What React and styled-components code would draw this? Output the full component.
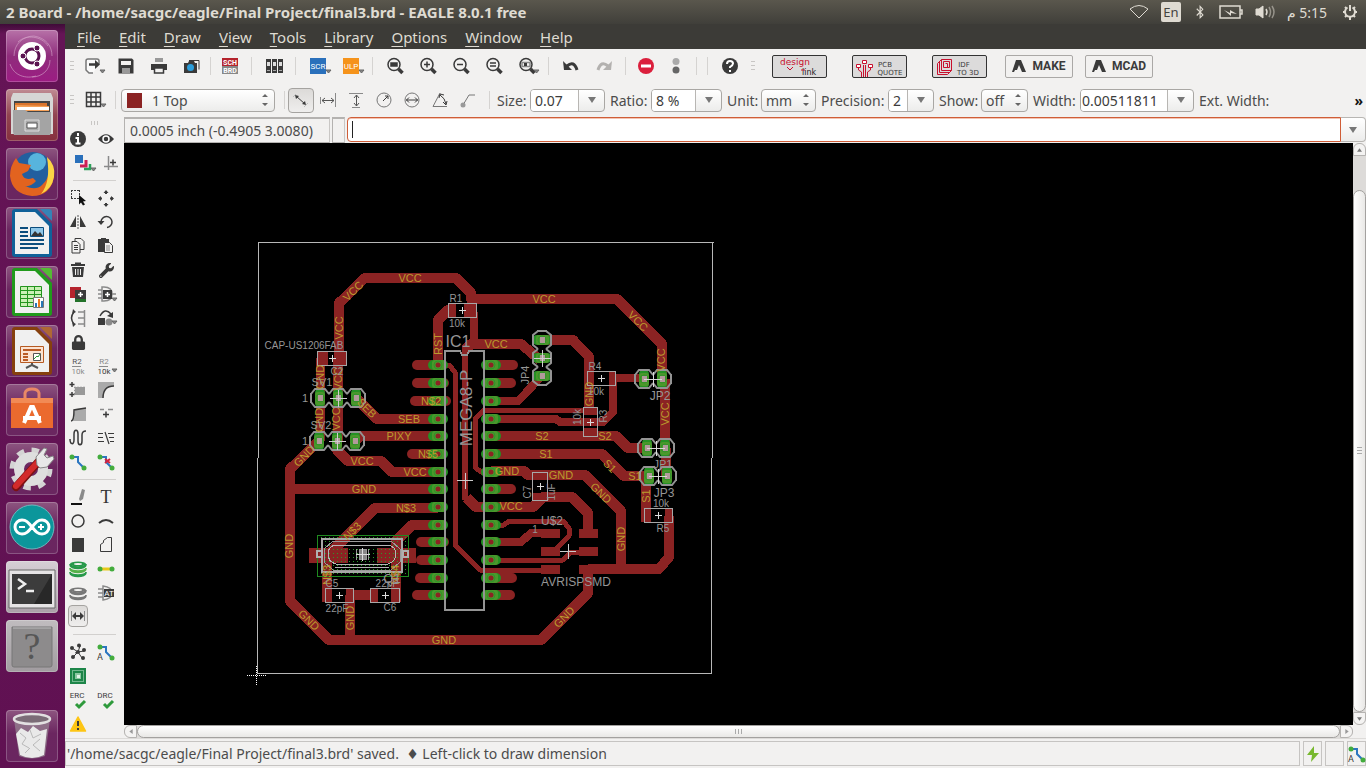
import React from "react";
import styled, { createGlobalStyle, css } from "styled-components";
import { FaWrench, FaLock, FaBluetoothB } from "react-icons/fa";

const GlobalStyle = createGlobalStyle`
  * { box-sizing: border-box; }
  html, body, #root { height: 100%; }
  body {
    margin: 0;
    overflow: hidden;
    background: #f2f1f0;
    color: #4c4c4c;
    font-family: "Noto Sans", "Open Sans", "DejaVu Sans", sans-serif;
    font-size: 14px;
  }
  button, input, select { font: inherit; color: inherit; }
  button { border: 0; padding: 0; background: none; cursor: pointer; }
  svg { display: block; flex: none; overflow: visible; }
`;

/* ---------- Shell ---------- */

const Desktop = styled.div`
  display: flex;
  flex-direction: column;
  height: 100vh;
`;

const TitleBar = styled.header`
  display: flex;
  align-items: center;
  height: 24px;
  flex: none;
  padding: 0 8px 0 6px;
  background: linear-gradient(#5a574d, #403f3a);
  color: #dfdbd2;
`;

const Title = styled.h1`
  flex: 1;
  margin: 0;
  font-size: 15px;
  line-height: 24px;
  font-weight: 700;
  white-space: nowrap;
`;

const Tray = styled.div`
  display: flex;
  align-items: center;
  gap: 12px;
`;

const Lang = styled.span`
  width: 20px;
  border-radius: 2px;
  background: #dfdbd2;
  color: #45443f;
  font-size: 13px;
  line-height: 20px;
  text-align: center;
`;

const Clock = styled.time`
  margin-right: 3px;
  font-size: 14px;
  white-space: nowrap;
`;

const Work = styled.div`
  display: flex;
  flex: 1;
  min-height: 0;
`;

const Launcher = styled.nav`
  display: flex;
  flex-direction: column;
  align-items: center;
  gap: 7px;
  width: 65px;
  flex: none;
  padding: 6px 1px 6px 0;
  background: linear-gradient(#3f0b38, #651456 10px, #601152);
`;

const Tile = styled.button`
  width: 52px;
  height: 52px;
  flex: none;
  border-radius: 4px;
  background: ${(p) => p.$bg || "linear-gradient(#8d5580, #6b2660 45%, #6a2660)"};
  box-shadow: inset 0 0 0 1px rgba(255, 255, 255, 0.22);

  &:last-child {
    margin-top: auto;
  }
`;

const Main = styled.main`
  display: flex;
  flex-direction: column;
  flex: 1;
  min-width: 0;
`;

const MenuBar = styled.nav`
  display: flex;
  align-items: center;
  gap: 18px;
  height: 25px;
  flex: none;
  padding-left: 12px;
  background: #3c3b37;
  color: #dfdbd2;
`;

const MenuItem = styled.button`
  font-size: 15px;
  line-height: 22px;

  u {
    text-underline-offset: 3px;
    text-decoration-skip-ink: none;
  }
`;

/* ---------- Toolbars ---------- */

const Toolbar = styled.div`
  display: flex;
  align-items: center;
  height: 34px;
  flex: none;
  white-space: nowrap;
`;

const Handle = styled.span`
  width: 14px;
  height: 10px;
  flex: none;
  background: repeating-linear-gradient(#c8c6c4 0 1px, transparent 1px 4px) center / 4px 100% no-repeat;
`;

const Separator = styled.span`
  width: ${(p) => p.$w || 11}px;
  height: 18px;
  flex: none;
  background: linear-gradient(#d5d3d1, #d5d3d1) center / 1px 100% no-repeat;
`;

const ToolButton = styled.button`
  display: flex;
  align-items: center;
  justify-content: center;
  width: ${(p) => p.$w || 33}px;
  height: 24px;
  flex: none;

  ${(p) =>
    p.$active &&
    css`
      height: ${p.$size || 25}px;
      border: 1px solid #a5a3a0;
      border-radius: 4px;
      background: linear-gradient(#dcdad8, #efeeed);
    `}
`;

const LinkButton = styled.button`
  display: flex;
  align-items: center;
  width: 55px;
  height: 23px;
  flex: none;
  margin-left: ${(p) => p.$gap || 25}px;
  border: 1px solid #333;
  border-radius: 2px;
  background: #dcdbdb;
`;

const CadButton = styled.button`
  display: flex;
  align-items: center;
  justify-content: center;
  gap: 6px;
  width: 68px;
  height: 23px;
  flex: none;
  margin-left: ${(p) => p.$gap || 12}px;
  border: 1px solid #aaa8a6;
  border-radius: 2px;
  font-family: Roboto, sans-serif;
  font-size: 12px;
  font-weight: 700;
  color: #3b3b3b;
`;

const Field = styled.label`
  display: flex;
  align-items: center;
  flex: none;
  margin-right: 5px;
`;

const FieldName = styled.span`
  width: ${(p) => p.$w}px;
`;

const Box = styled.span`
  display: flex;
  align-items: center;
  width: ${(p) => p.$w}px;
  height: 23px;
  flex: none;
  overflow: hidden;
  border: 1px solid #a9a7a4;
  border-radius: 4px;
  background: linear-gradient(#fff, #ececeb);
`;

const TextInput = styled.input`
  flex: 1;
  min-width: 0;
  height: 100%;
  padding: 0 0 0 ${(p) => p.$pad || 4}px;
  border: 0;
  border-right: 1px solid #b8b6b3;
  background: #fff;
  color: #3c3c3c;
  outline: none;
`;

const Arrow = styled.button`
  display: flex;
  align-items: center;
  justify-content: center;
  width: 25px;
  height: 100%;
  flex: none;
`;

const Select = styled.select`
  flex: 1;
  min-width: 0;
  height: 100%;
  padding: 0 0 0 ${(p) => p.$pad || 4}px;
  border: 0;
  appearance: none;
  background: none;
  outline: none;
`;

const Swatch = styled.span`
  width: 15px;
  height: 15px;
  margin-left: 5px;
  background: #8b2323;
`;

const More = styled.button`
  margin-left: auto;
  margin-right: 3px;
  color: #111;
  font-weight: 700;
`;

/* ---------- Body ---------- */

const Body = styled.div`
  display: flex;
  flex: 1;
  min-height: 0;
`;

const Palette = styled.aside`
  width: 59px;
  flex: none;
`;

const PaletteHandle = styled.div`
  height: 10px;
  background: repeating-linear-gradient(90deg, #c8c6c4 0 1px, transparent 1px 3px) 26px 4px / 7px 4px no-repeat;
`;

const PaletteGrid = styled.div`
  display: grid;
  grid-template-columns: 26px 30px;
  grid-auto-rows: 24px;
  justify-items: center;
`;

const PaletteRule = styled.hr`
  height: 1px;
  margin: 5px 8px;
  border: 0;
  background: #d2d0ce;
`;

const Editor = styled.section`
  display: flex;
  flex-direction: column;
  flex: 1;
  min-width: 0;
`;

const CommandRow = styled.div`
  display: flex;
  gap: 2px;
  height: 26px;
  flex: none;
`;

const Sunken = styled.output`
  display: flex;
  align-items: center;
  width: ${(p) => p.$w}px;
  flex: none;
  padding-left: 5px;
  border: 1px solid #b4b2b0;
  border-top: 2px solid #b4b2b0;
  border-right-color: #c9c7c5;
  line-height: 20px;
  white-space: nowrap;
`;

const CommandBox = styled.div`
  display: flex;
  flex: 1;
  min-width: 0;
  height: 25px;
`;

const CommandInput = styled.input`
  flex: 1;
  min-width: 0;
  padding: 0 4px;
  border: 1px solid #cf5d37;
  border-radius: 4px 0 0 4px;
  background: linear-gradient(#222, #222) 4px center / 1px 17px no-repeat #fff;
  box-shadow: inset 0 1px 0 #f3c3b2;
  caret-color: transparent;
  outline: none;
`;

const CommandArrow = styled(Arrow)`
  border: 1px solid #b8b6b3;
  border-left: 0;
  border-radius: 0 4px 4px 0;
  background: linear-gradient(#fff, #ececeb);
`;

const CanvasGrid = styled.div`
  display: grid;
  grid-template-columns: 1fr 13px;
  grid-template-rows: 1fr 13px;
  flex: 1;
  min-height: 0;
`;

const Canvas = styled.div`
  min-width: 0;
  min-height: 0;
  overflow: hidden;
  background: #000;

  svg {
    width: 100%;
    height: 100%;
  }
`;

const ScrollBar = styled.div`
  display: flex;
  flex-direction: ${(p) => (p.$vertical ? "column" : "row")};
  background: #dddbd9;
  border-radius: 7px;
`;

const ScrollArrow = styled.button`
  display: flex;
  align-items: center;
  justify-content: center;
  width: 13px;
  height: 13px;
  flex: none;
  border: 1px solid #b5b3b1;
  border-radius: ${(p) => p.$r};
  background: #f4f3f2;
`;

const Thumb = styled.div`
  display: flex;
  align-items: center;
  justify-content: center;
  flex: 1;
  margin: ${(p) => (p.$vertical ? "34px 0 0" : "0")};
  border: 1px solid #a3a19f;
  border-radius: 7px;
  background: linear-gradient(${(p) => (p.$vertical ? "90deg" : "180deg")}, #fff, #e9e8e6);
`;

const StatusBar = styled.footer`
  display: flex;
  gap: 3px;
  height: 30px;
  flex: none;
  padding: 2px 0 2px;
  border-top: 1px solid #dddbd9;
`;

const StatusCell = styled.div`
  display: flex;
  align-items: center;
  width: ${(p) => p.$w || 19}px;
  flex: ${(p) => (p.$grow ? 1 : "none")};
  justify-content: ${(p) => (p.$grow ? "flex-start" : "center")};
  padding-left: ${(p) => (p.$grow ? 1 : 0)}px;
  border: 1px solid #c6c4c2;
  white-space: pre;
`;

/* ---------- Icons ---------- */

const DARK = "#3a3a3a";
const MID = "#8a8a8a";

const Icon = ({ children, w = 24, ...rest }) => (
  <svg width={w} height={24} viewBox={`0 0 ${w} 24`} fill="none" stroke={DARK} strokeWidth="1.5" {...rest}>
    {children}
  </svg>
);

const Tri = ({ x, y = 16 }) => <path d={`M${x} ${y}h5l-2.500 3z`} fill="#888" stroke="#666" strokeWidth="1" />;

const Down = () => (
  <svg width="8" height="6" viewBox="0 0 8 6">
    <path d="M0 0h8L4 6z" fill="#777" />
  </svg>
);

const UpDown = () => (
  <svg width="14" height="14" viewBox="0 0 14 14" fill="#666">
    <path d="M2 4h6L5 1zM2 10h6l-3 3z" />
  </svg>
);

const Mag = ({ children }) => (
  <>
    <circle cx="11" cy="10.500" r="6" strokeWidth="1.500" />
    <path d="M15.500 15l4 4" strokeWidth="3.500" />
    {children}
  </>
);

const Small = ({ children, ...rest }) => (
  <text stroke="none" fill={DARK} fontSize="8" fontFamily="Roboto, sans-serif" textAnchor="middle" {...rest}>
    {children}
  </text>
);

const RouteIcon = ({ children }) => (
  <Icon>
    <path d="M6 7h6v5l6 6" stroke="#2b76c0" strokeWidth="2" />
    <circle cx="6" cy="7" r="2.500" fill="#43ac3d" stroke="none" />
    <circle cx="18" cy="18" r="2.500" fill="#43ac3d" stroke="none" />
    {children}
  </Icon>
);

const Disc = ({ y, color, top }) => (
  <g stroke="none">
    <path d={`M4 ${y}a8 3 0 0 0 16 0v1a8 3.500 0 0 1-16 0z`} fill={color} stroke={color} />
    {top && <ellipse cx="12" cy={y} rx="8" ry="2.500" fill={color} />}
    {top && <ellipse cx="12" cy={y} rx="4" ry="1" fill="#f2f1f0" />}
  </g>
);

const paletteTop = [
  ["Info", <Icon><circle cx="12" cy="12" r="8" fill={DARK} stroke="none" /><path d="M12 6v3M9.500 11h2.500v5M9.500 16.500h5" stroke="#fff" strokeWidth="2" /></Icon>],
  ["Show", <Icon><path d="M4 12Q12 2.500 20 12Q12 21.500 4 12z" fill={DARK} stroke="none" /><circle cx="12" cy="12" r="3" stroke="#fff" /></Icon>],
  ["Display", <Icon><path d="M9 4h8v8H9z" fill="#2a70bb" stroke="none" /><path d="M20 9v6h-6" stroke="#cf1f56" strokeWidth="3" /><path d="M24 13v5h-6" stroke="#2ca05a" strokeWidth="2.500" /><Tri x={25} y={17} /></Icon>],
  ["Mark", <Icon stroke={MID}><path d="M14.500 5v14M10 15.500h14" /><path d="M19 8.500v6M16 11.500h6" stroke={DARK} /></Icon>],
];

const paletteEdit = [
  ["Group", <Icon><path d="M5 4.500h9M5 12.500h9M5.500 4v9M13.500 4v9" strokeDasharray="2 1" strokeWidth="1" /><path d="M13 9l7 6-3 .5 2 3-2 1-2-3-2 2z" fill="#111" stroke="none" /></Icon>],
  ["Move", <Icon fill={DARK}><path d="M12 5v3M12 17v3M5 12.500h3M16 12.500h3" strokeWidth="2" /><path d="M9.500 7l2.500-3 2.500 3zM9.500 18l2.500 3 2.500-3zM7 10l-3 2.500L7 15zM17 10l3 2.500-3 2.500z" stroke="none" /></Icon>],
  ["Mirror", <Icon><path d="M4 17h6V6zM20 17h-6V6z" fill={DARK} stroke="none" /><path d="M12 5v14" stroke={MID} strokeDasharray="2 1" /></Icon>],
  ["Rotate", <Icon><path d="M7 12a5.500 5.500 0 1 1 6 5.500" /><path d="M3.500 11h7L7 15z" fill={DARK} stroke="none" /></Icon>],
  ["Copy", <Icon strokeWidth="1"><path d="M9 4.500h6l3 3v8H9z" fill="#f2f1f0" /><path d="M6 7.500h5l3 3v8.500H6z" fill="#f2f1f0" /><path d="M8 11.500h4M8 13.500h4M8 15.500h4" /></Icon>],
  ["Paste", <Icon strokeWidth="1"><path d="M4 5h3V4h5v1h3v13H4z" fill={DARK} stroke="none" /><path d="M10.500 8.500h5l3 3v7h-8z" fill="#f2f1f0" /><path d="M12 12h4M12 14h4M12 16h4" stroke={MID} /></Icon>],
  ["Delete", <Icon><path d="M5 7h14M9 5.500h6" strokeWidth="2" /><path d="M6 9h12l-1 10H7z" fill={DARK} stroke="none" /><path d="M9.500 11v6M12 11v6M14.500 11v6" stroke="#f2f1f0" strokeWidth="1" /></Icon>],
  ["Change", <FaWrench size={15} color={DARK} />],
  ["Add", <Icon stroke="none"><path d="M4 5h11v11H4z" fill="#b5232d" /><path d="M9 14h11v6H9z" fill="#23722a" /><path d="M9 8h11v9H9z" fill={DARK} /><path d="M14.500 10v5M12 12.500h5" stroke="#fff" strokeWidth="1.500" /></Icon>],
  ["Invoke", <Icon stroke={MID}><path d="M4 8h4M4 12h4M4 16h4M8 5h2q8 0 8 7t-8 7H8z" /><path d="M9 8h9v9H9z" fill={DARK} stroke="none" /><path d="M13.500 10v5M11 12.500h5" stroke="#fff" /><path d="M18 12h4" /><Tri x={18} y={16} /></Icon>],
  ["Pinswap", <Icon><path d="M8 6q-5 6 0 12" /><path d="M7 3l3 3-4 2zM6 16l4 2-3 3z" fill={DARK} stroke="none" /><path d="M18.500 4v17M12 6h6M12 12h6M12 18h6" stroke={MID} /></Icon>],
  ["Replace", <Icon><path d="M6 10q5-9 11-2" /><path d="M19 6v6l-6-2z" fill={DARK} stroke="none" /><path d="M4 12h7v7H4z" fill={DARK} stroke="none" /><circle cx="15" cy="16" r="3.500" fill={MID} stroke="none" /><Tri x={18} y={15} /></Icon>],
  ["Lock", <FaLock size={15} color={DARK} />],
  null,
  ["Name", <Icon><Small x="11" y="10" fill="#555">R2</Small><path d="M6 12.500h9" stroke={MID} strokeWidth="1" /><Small x="12" y="20" fill={MID}>10k</Small></Icon>],
  ["Value", <Icon><Small x="10" y="10" fill={MID}>R2</Small><path d="M5 12.500h9" stroke={MID} strokeWidth="1" /><Small x="10" y="20">10k</Small><Tri x={18} y={15} /></Icon>],
  ["Smash", <Icon><path d="M9 9h10v8H9z" fill="#999" stroke="none" /><path d="M8 9.500h12M8 12.500h12M8 15.500h12" stroke="#999" strokeDasharray="2 1" /><path d="M6 4v5M3.500 6.500h5M6 14v5M3.500 16.500h5" /></Icon>],
  ["Miter", <Icon><path d="M4 20V4h16v4q-11 0-11 12z" fill="#aaa" stroke="none" /><path d="M20 8Q9 8 9 20" /></Icon>],
  ["Split", <Icon><path d="M9 7l11-1v13H6z" fill="#aaa" stroke="none" /><path d="M5 19q3 0 3-11l12-2" /></Icon>],
  ["Optimize", <Icon><path d="M6 7.500h4M14 7.500h5" stroke={MID} /><path d="M9 12.500h6M12 9.500v6" /></Icon>],
  ["Meander", <Icon><path d="M4 13c0 6 4 6 4 1V8c0-5 4-5 4 0v7c0 5 4 5 4 0V9c0-3 1-4 4-4" /></Icon>],
  ["Ripup pairs", <Icon strokeWidth="1.200"><path d="M4 7.500h5M4 11.500h5M4 15.500h6M11 6l4 12M14 7.500h6M15 11.500h5M16 15.500h4" /></Icon>],
  ["Route", <RouteIcon />],
  ["Ripup", <RouteIcon><path d="M11 9l5 4M16 9l-5 4" stroke="#d4213d" strokeWidth="2" /></RouteIcon>],
];

const paletteDraw = [
  ["Line", <Icon><path d="M5 19h11" stroke="#111" strokeWidth="2" /><path d="M16 4l3 1-2 9-3 2-1-2z" fill={MID} stroke="none" /></Icon>],
  ["Text", <Icon><text x="12" y="18" stroke="none" fill="#333" fontSize="18" fontFamily="Liberation Serif, serif" textAnchor="middle">T</text></Icon>],
  ["Circle", <Icon><circle cx="12" cy="12" r="6" strokeWidth="1.500" /></Icon>],
  ["Arc", <Icon><path d="M5 14q7-6 14 0" strokeWidth="2" /></Icon>],
  ["Rect", <Icon><path d="M6 5h12v14H6z" fill={DARK} stroke="none" /></Icon>],
  ["Polygon", <Icon strokeWidth="1"><path d="M17.500 4.500v14h-11v-7l3-2v-2l4-3z" /></Icon>],
  ["Via", <Icon><Disc y={15} color="#27994a" /><Disc y={11} color="#55b14a" /><Disc y={7} color="#27994a" top /></Icon>],
  ["Signal", <Icon><path d="M7 12h10" stroke="#e9c91a" strokeWidth="3" /><g fill="#43ac3d" stroke="none"><circle cx="6" cy="12" r="2.500" /><circle cx="18" cy="12" r="2.500" /></g></Icon>],
  ["Hole", <Icon><Disc y={14} color="#777" /><Disc y={9} color="#777" top /></Icon>],
  ["Attribute", <Icon stroke={MID}><path d="M4 8h5M4 12h5M4 16h5M9 5q9 1 9 7t-9 7z" /><path d="M10 8h10v8H10z" fill={DARK} stroke="none" /><Small x="15" y="15" fill="#fff">AT</Small></Icon>],
  ["Dimension", <Icon><path d="M5.500 7v10M18.500 7v10" stroke={MID} strokeWidth="1" /><path d="M7 12h10" strokeWidth="2" /><path d="M6 12l4-4v8zM18 12l-4-4v8z" fill={DARK} stroke="none" /></Icon>, true],
  null,
];

const paletteCheck = [
  ["Ratsnest", <Icon strokeWidth="1" fill={DARK}><path d="M12 12L6 8M12 12l2-6M12 12l6-1M12 12l4 6M12 12l-5 5M12 12l-3 1" /><g stroke="none"><circle cx="6" cy="8" r="2" /><circle cx="13" cy="5.500" r="2" /><circle cx="18" cy="10" r="2" /><circle cx="17" cy="18" r="2" /><circle cx="7" cy="17" r="2" /><circle cx="12" cy="12" r="2" /></g></Icon>],
  ["Autorouter", <RouteIcon><Small x="6" y="20" fontSize="9">A</Small></RouteIcon>],
  ["Drill aid", <Icon><path d="M4 4h16v16H4z" fill="#1d8548" stroke="none" /><path d="M6.500 6.500h11v11h-11z" stroke="#c9e8d3" strokeWidth="1" strokeDasharray="1 1" /><path d="M9 9h6v6H9z" fill="#8cc7a1" stroke="none" /><path d="M11 11h3v3h-3z" fill="#e3f3e8" stroke="none" /></Icon>],
  null,
  ["ERC", <Icon><Small x="11" y="10">ERC</Small><path d="M10 16l3 3 6-6" stroke="#2f9a3c" strokeWidth="3" /></Icon>],
  ["DRC", <Icon><Small x="11" y="10">DRC</Small><path d="M10 16l3 3 6-6" stroke="#2f9a3c" strokeWidth="3" /></Icon>],
  ["Errors", <Icon><path d="M12 5l7.500 14h-15z" fill="#fdc515" stroke="#fdc515" strokeLinejoin="round" /><path d="M12 9v5M12 16v2" strokeWidth="2" /></Icon>],
];

/* ---------- Launcher art ---------- */

const Art = ({ children }) => (
  <svg width="52" height="52" viewBox="0 0 52 52" fill="none">
    {children}
  </svg>
);

const OfficeDoc = ({ color, light, children }) => (
  <Art>
    <path d="M9 2h22l15 15v30q0 3-3 3H9q-3 0-3-3V5q0-3 3-3z" fill={color} />
    <path d="M34 2h9q3 0 3 3v9z" fill={light} />
    <path d="M9 5h20l14 14v28H9z" fill="#f0f0f0" />
    {children}
  </Art>
);

const apps = [
  {
    name: "Dash",
    bg: "linear-gradient(#b772a8, #8f2d7c 50%, #9c1c83)",
    art: (
      <Art>
        <path d="M8 26c0-12 9-20 20-20 12 2 18 10 18 20M4 34C8 46 20 49 30 46M44 30c0 10-8 17-18 17M12 12C20 4 36 6 42 16" stroke="#d7a6cc" opacity=".6" />
        <circle cx="26" cy="26" r="14" fill="#fff" />
        <circle cx="26" cy="26" r="7" stroke="#5b1250" strokeWidth="3" />
        <g fill="#5b1250" stroke="#fff"><circle cx="17" cy="26" r="3" /><circle cx="31" cy="18" r="3" /><circle cx="31" cy="34" r="3" /></g>
      </Art>
    ),
  },
  {
    name: "Files",
    bg: "linear-gradient(#c08c94, #924451 50%, #85303e)",
    art: (
      <Art>
        <path d="M7 4h38l2 5v36H5V9z" fill="#d6d6d5" />
        <path d="M8 12h36v12H8z" fill="#454545" />
        <path d="M9 14h32v4H9z" fill="#d9742d" /><path d="M9 16l34 1v5H9z" fill="#f4a058" /><path d="M11 18h32v3H11z" fill="#fff" />
        <path d="M7 21h12l3 2h23v20l-1 3H8l-1-3z" fill="#a4a4a4" />
        <path d="M19 31h14v11H19z" fill="#aaa" stroke="#ddd" /><path d="M21 34h10v5H21z" fill="#fff" stroke="#555" />
      </Art>
    ),
  },
  {
    name: "Firefox",
    art: (
      <Art>
        <circle cx="27" cy="24" r="20" fill="#225f9f" /><circle cx="31" cy="14" r="9" fill="#57b4dd" />
        <path d="M41 10q8 8 7 18-3 20-22 20Q6 46 4 28q0-10 6-18l3 5 12 2-3 6-6 3q2 7 11 4l3 3q-5 6-11 5 11 5 17-1Q47 27 41 10z" fill="#e2631f" />
        <path d="M41 9q9 8 7 20-2 12-13 17 10-12 6-37z" fill="#fbd546" />
      </Art>
    ),
  },
  {
    name: "Writer",
    art: (
      <OfficeDoc color="#106199" light="#3583b6">
        <path d="M14 21h8M14 25h8M14 29h8M14 33h24M14 37h24M14 41h18" stroke="#0b4d7d" strokeWidth="2" />
        <path d="M24.500 20.500h13v9h-13z" fill="#8fc7e8" stroke="#0b4d7d" /><path d="M25 29l4-5 3 3 2-2 3 4z" fill="#333" />
      </OfficeDoc>
    ),
  },
  {
    name: "Calc",
    art: (
      <OfficeDoc color="#219a1c" light="#54bb34">
        <path d="M14.500 20.500h21v20h-21zM14 24.500h21M14 28.500h21M14 32.500h21M14 36.500h21M21.500 20v20M28.500 20v20" fill="#caf0b5" stroke="#23951e" />
        <path d="M27.500 31.500h10v10h-10z" fill="#fff" stroke="#777" /><path d="M29 37h2v4h-2z" fill="#2878b8" /><path d="M32 33h2v8h-2z" fill="#ef7b20" /><path d="M35 35h2v6h-2z" fill="#2878b8" />
      </OfficeDoc>
    ),
  },
  {
    name: "Impress",
    art: (
      <OfficeDoc color="#86400e" light="#af6834">
        <path d="M14.500 21.500h23v16h-23z" fill="#fce3d2" stroke="#b65a22" />
        <path d="M17 25h18M17 29h5M17 32h5M17 35h5" stroke="#bb5c25" strokeWidth="2" />
        <path d="M27.500 28.500h7v7h-7z" fill="#fff" stroke="#555" /><path d="M28 34l3-3 1 1 2-3" stroke="#2d9a3a" /><path d="M26 38v2l-6 3M26 40l6 3" stroke="#555" strokeWidth="2" />
      </OfficeDoc>
    ),
  },
  {
    name: "Software",
    art: (
      <Art>
        <path d="M19 15V9q1-4 7-4t7 4v6" stroke="#e98866" strokeWidth="3" />
        <path d="M5 14h42v30H5z" fill="#eb6a2e" /><path d="M5 14h42v5H5z" fill="#f18a55" />
        <path d="M18 39l7-16h2l7 16M17 34h18" stroke="#fff" strokeWidth="4" />
      </Art>
    ),
  },
  {
    name: "Settings",
    art: (
      <Art>
        <circle cx="25" cy="26" r="18" stroke="#d4d4d4" strokeWidth="7" strokeDasharray="7 7.137" />
        <circle cx="25" cy="26" r="12" stroke="#dedede" strokeWidth="10" />
        <path d="M10 44L34 17" stroke="#7c1212" strokeWidth="8" strokeLinecap="round" /><path d="M10 43L31 20" stroke="#d22b2b" strokeWidth="6" strokeLinecap="round" />
        <path d="M31 22l-1-8 8-9 3 1-3 6 3 3 6-2 1 3-7 8-7 1z" fill="#e8e8e8" stroke="#888" />
      </Art>
    ),
  },
  {
    name: "Arduino",
    art: (
      <Art>
        <circle cx="26" cy="25" r="22" fill="#0b969b" stroke="#6bb8bd" />
        <path d="M26 25c-4-5-6-7-10-7a7 7 0 0 0 0 14c4 0 6-2 10-7s6-7 10-7a7 7 0 0 1 0 14c-4 0-6-2-10-7z" stroke="#fff" strokeWidth="3" />
        <path d="M13 25h6M32 25h6M35 22v6" stroke="#fff" strokeWidth="2" />
      </Art>
    ),
  },
  {
    name: "Terminal",
    bg: "linear-gradient(#d6cfd5, #aaa0a8)",
    art: (
      <Art>
        <path d="M3 9h46v38H3z" fill="#e6e4e5" stroke="#666" /><path d="M6 13h40v30H6z" fill="#282828" /><path d="M6 13h40L28 43H6z" fill="#3c3c3c" />
        <path d="M12 18l7 5-7 5M20 30h8" stroke="#eee" strokeWidth="2.500" />
      </Art>
    ),
  },
  {
    name: "Unknown",
    bg: "linear-gradient(#c0bcbf, #a19ca0)",
    art: (
      <Art>
        <path d="M6 7h40v38q0 2-2 2H8q-2 0-2-2z" fill="#8d8b8c" stroke="#777" /><path d="M7 8h38" stroke="#bbb" />
        <text x="26" y="39" textAnchor="middle" fontSize="38" fontFamily="Liberation Serif, serif" fill="#565656">?</text>
      </Art>
    ),
  },
  {
    name: "Trash",
    art: (
      <Art>
        <path d="M8 9h36l-5 37q-13 5-26 0z" fill="#9b8f98" opacity=".65" />
        <path d="M10 24l5-6 7 4 5-6 7 5 7-2-3 26q-12 6-24 0z" fill="#e9e9e9" />
        <path d="M14 23l6 5-4 6 7 4M24 20l3 8 8-4M34 29l-7 6 7 6M19 43l5-5" stroke="#b9b9b9" />
        <ellipse cx="26" cy="9" rx="18" ry="5" fill="#7b6c77" stroke="#e2e0e1" strokeWidth="2.500" />
      </Art>
    ),
  },
];

/* ---------- Board ---------- */

const COPPER = "#8b2323";
const pinY = [365, 383, 401, 419, 436, 454, 472, 489, 507, 525, 542, 560, 578, 595];

// [width, path]
const traces = [
  [10, "M339 358V303L365 278H456L471 293V299H617L662 344V379"],
  [10, "M665 379V448M666 448V476"],
  [8, "M474 312V344"],
  [10, "M465 350L471 344H521L540 360"],
  [6, "M465 346V500"],
  [10, "M467 498L476 507H491"],
  [10, "M452 310H448L438 320V365"],
  [5, "M438 365H449L455 372V545L480 570H550"],
  [5, "M590 410H484L475 419V467L481 472H491"],
  [10, "M438 419H377L357 399"],
  [10, "M438 436H360L355 441"],
  [10, "M337 441V450L348 461H381L392 472H438"],
  [10, "M438 489H290"],
  [10, "M319 441L290 469V601L329 640H541L588 593V569"],
  [10, "M588 569H659L669 557V516"],
  [10, "M491 471H524L528 475H585L621 511V573"],
  [10, "M491 507H533L543 497H572L588 513V533"],
  [9, "M320 358V441"],
  [10, "M338 358V441"],
  [10, "M438 508H375L330 553"],
  [10, "M438 525H412L396 541V602"],
  [10, "M327 555V602"],
  [10, "M350 595H375M350 595V640"],
  [10, "M542 340H573L589 357V410"],
  [8, "M613 379V412L603 422H560L556 419H491"],
  [8, "M613 378H644"],
  [8, "M491 401H518L542 376"],
  [10, "M491 436H616L628 448H648"],
  [10, "M491 454H602L624 476H649"],
  [10, "M646 476V522"],
  [5, "M491 525H504L509 521H563L569 528V536L556 549"],
  [8, "M491 542H521L531 533H545"],
  [5, "M491 560H563L571 552H580"],
];

const stubs = [
  [0, 417, 438], [1, 417, 444], [2, 415, 446], [5, 412, 438], [10, 421, 444], [11, 421, 438], [12, 420, 438], [13, 417, 438],
  [0, 491, 513], [1, 491, 511], [7, 491, 511], [12, 491, 512], [13, 491, 510],
];

// [x, y, w, h]
const smdPads = [
  [448, 303, 8, 15], [464, 303, 13, 15], [317, 351, 11, 15], [334, 351, 13, 15],
  [325, 588, 7, 15], [346, 588, 8, 15], [370, 588, 8, 15], [391, 588, 9, 15],
  [309, 548, 39, 15], [377, 548, 39, 15],
  [587, 371, 7, 15], [609, 371, 7, 15], [583, 407, 15, 8], [583, 428, 15, 9],
  [532, 472, 16, 8], [532, 493, 16, 8], [644, 508, 7, 15], [665, 508, 8, 15],
  [541, 529, 19, 9], [541, 547, 19, 9], [541, 565, 19, 9], [579, 529, 19, 9], [579, 547, 19, 9], [579, 565, 19, 9],
];

const bodies = [
  [448, 303, 28, 14], [317, 351, 29, 14], [325, 588, 28, 14], [370, 588, 29, 14],
  [587, 371, 28, 14], [583, 407, 14, 29], [532, 472, 15, 28], [644, 508, 28, 14],
];

// x, y is the first pin, the others follow every 18 units
const headers = [
  { x: 320, y: 398, pins: 3 },
  { x: 319, y: 441, pins: 3 },
  { x: 542, y: 340, pins: 3, vertical: true },
  { x: 644, y: 379, pins: 2 },
  { x: 647, y: 448, pins: 2 },
  { x: 649, y: 476, pins: 2 },
];

// [text, x, y, angle, size]
const netLabels = [
  ["VCC", 410, 278], ["VCC", 353, 291, -45], ["VCC", 339, 328, -90], ["VCC", 338, 379, -90],
  ["RST", 438, 344, -90], ["GND", 320, 377, -90], ["SEB", 367, 408, 45], ["SEB", 409, 419],
  ["PIXY", 399, 436], ["N$2", 431, 401], ["N$5", 428, 454], ["GND", 304, 456, -45],
  ["GND", 319, 420, -90], ["VCC", 336, 419, -90], ["VCC", 362, 461], ["VCC", 415, 472],
  ["GND", 364, 489], ["N$3", 406, 508], ["N$3", 352, 531, -45], ["GND", 289, 546, -90],
  ["GND", 309, 620, 45], ["GND", 350, 618, -90], ["GND", 444, 640], ["GND", 564, 617, -45],
  ["N$3", 327, 575, -90], ["N$4", 395, 575, -90], ["VCC", 544, 299], ["VCC", 638, 321, 45],
  ["VCC", 496, 344], ["VCC", 661, 360, -90], ["VCC", 665, 414, -90], ["GND", 589, 394, -90],
  ["S2", 542, 436], ["S2", 605, 436], ["S1", 546, 454], ["S1", 610, 466, 45], ["S1", 635, 476],
  ["S1", 646, 496, -90], ["GND", 507, 471], ["GND", 561, 475], ["VCC", 511, 506],
  ["GND", 601, 493, 45], ["GND", 621, 539, -90],
];

const partLabels = [
  ["R1", 456, 298, 0, 10], ["10k", 457, 323, 0, 10], ["IC1", 458, 341, 0, 16], ["CAP-US1206FAB", 304, 345, 0, 10],
  ["C2", 337, 371, 0, 10], ["SV1", 322, 382, 0, 11], ["1", 305, 398, 0, 11], ["SV2", 321, 425, 0, 11], ["1", 305, 441, 0, 11],
  ["MEGA8-P", 466, 408, -90, 17], ["C5", 332, 583, 0, 10], ["22pF", 337, 608, 0, 10], ["22pF", 387, 583, 0, 10],
  ["C6", 390, 607, 0, 10], ["Q1", 392, 578, 0, 13], ["JP4", 525, 375, -90, 11], ["R4", 595, 366, 0, 10], ["10k", 596, 391, 0, 10],
  ["10k", 577, 417, -90, 10], ["R3", 603, 416, -90, 10], ["JP2", 660, 396, 0, 12], ["JP1", 663, 464, 0, 11],
  ["JP3", 664, 493, 0, 12], ["10k", 661, 503, 0, 10], ["R5", 663, 528, 0, 10], ["C7", 527, 492, -90, 10],
  ["1uF", 551, 492, -90, 10], ["U$2", 552, 521, 0, 12], ["1", 535, 529, 0, 10], ["AVRISPSMD", 576, 582, 0, 12],
];

const Legend = ({ items, fill }) => (
  <g fill={fill} fontFamily="Liberation Sans, Arial, sans-serif" textAnchor="middle">
    {items.map(([text, x, y, angle = 0, size = 11], i) => (
      <text key={i} fontSize={size} transform={`translate(${x} ${y}) rotate(${angle})`} y={Math.round(size * 0.36)}>
        {text}
      </text>
    ))}
  </g>
);

const Pin = ({ x, y, upright }) => (
  <g transform={`translate(${x} ${y}) rotate(${upright ? 90 : 0})`} shapeRendering="auto">
    <rect x="-10" y="-5" width="20" height="10" rx="5" fill="#249124" />
    <rect x="-6" y="-5" width="13" height="10" rx="3" fill="#4c972c" />
    <circle r="4" stroke="#2f942b" />
  </g>
);

// one outline for the whole row, waisted between the pins
const headerOutline = (pins) => {
  const end = pins * 18 - 9;
  let d = "";
  for (let i = 0; i < pins; i++) {
    const c = i * 18;
    d += `M${c - 9}-4L${c - 5}-9H${c + 5}L${c + 9}-4M${c - 9} 4L${c - 5} 9H${c + 5}L${c + 9} 4`;
  }
  return `${d}M-9-5V5M${end}-5V5`;
};

const Header = ({ x, y, pins, vertical }) => {
  const spots = Array.from({ length: pins }, (_, i) => (vertical ? [x, y + i * 18] : [x + i * 18, y]));
  return (
    <g>
      {spots.map(([px, py]) => (
        <Pin key={`${px}-${py}`} x={px} y={py} upright={!vertical} />
      ))}
      <path
        transform={`translate(${x} ${y}) rotate(${vertical ? 90 : 0})`}
        d={headerOutline(pins)}
        stroke="#949494"
        strokeWidth="2"
        shapeRendering="auto"
      />
      {spots.map(([px, py]) => (
        <path key={`${px}-${py}`} d={`M${px - 2} ${py - 3}h5v6h-5z`} fill="#b39a9a" />
      ))}
      {pins === 3 ? (
        <path d={`M${spots[1][0] - 8} ${spots[1][1] + 0.5}h17M${spots[1][0] + 0.5} ${spots[1][1] - 8}v17`} stroke="#cfcfcf" />
      ) : (
        <path d={`M${x} ${y + 0.5}h18M${x + 9.5} ${y - 7}v15`} stroke="#d8d8d8" />
      )}
    </g>
  );
};

const Board = () => (
  <svg viewBox="124 143 1229 582" preserveAspectRatio="xMinYMin meet" fill="none" role="img" aria-label="Board layout">
    <defs>
      <pattern id="keepout" width="4" height="4" patternUnits="userSpaceOnUse">
        <path d="M1 1h1v1h-1z" fill="#2a9a2a" />
      </pattern>
    </defs>

    <g shapeRendering="crispEdges">
      <g stroke={COPPER}>
        {traces.map(([width, d], i) => (
          <path key={i} d={d} strokeWidth={width} strokeLinejoin="round" />
        ))}
        {stubs.map(([pin, from, to], i) => (
          <path key={i} d={`M${from} ${pinY[pin]}H${to}`} strokeWidth="10" strokeLinecap="round" shapeRendering="auto" />
        ))}
      </g>
      <g fill={COPPER}>
        {smdPads.map(([x, y, w, h], i) => (
          <rect key={i} x={x} y={y} width={w} height={h} />
        ))}
      </g>

      {pinY.map((y) => (
        <React.Fragment key={y}>
          <Pin x={438} y={y} />
          <Pin x={491} y={y} />
          <circle cx="438" cy={y} r="2.500" fill={COPPER} shapeRendering="auto" />
          <circle cx="491" cy={y} r="2.500" fill={COPPER} shapeRendering="auto" />
        </React.Fragment>
      ))}

      {headers.map((header, i) => (
        <Header key={i} {...header} />
      ))}

      {/* crystal */}
      <path d="M317 535h91v41h-91z" fill="url(#keepout)" stroke="#1f8a1f" />
      <path d="M322 539h80v33h-80z" stroke="#a8a8a8" strokeWidth="2" />
      <path d="M333 541h58l9 8v13l-9 8h-58l-9-8v-13z" stroke="#9a9a9a" />
      <path d="M336 545h52q8 2 8 9t-8 10h-52q-8-2-8-10t8-9zM335 567h54" stroke="#b5b5b5" />
      <path d="M317 551h5v6h-5zM403 551h5v6h-5z" stroke="#b0b0b0" strokeWidth="2" />
      <path d="M356.500 549v11M368.500 549v11M359 549h7v10h-7z" fill="#888" stroke="#999" />
      <path d="M356 554.500h14M362.500 548v13" stroke="#ddd" />

      {bodies.map(([x, y, w, h], i) => {
        const cx = x + Math.round(w / 2);
        const cy = y + Math.round(h / 2);
        return (
          <g key={i}>
            <rect x={x + 0.5} y={y + 0.5} width={w} height={h} stroke="#a8a8a8" />
            <path d={`M${cx - 3} ${cy + 0.5}h7M${cx + 0.5} ${cy - 3}v7`} stroke="#ddd" />
          </g>
        );
      })}

      {/* chip */}
      <path d="M460 351H445V610H484V351H469L467 355H462z" stroke="#949494" strokeWidth="2" />
      <path d="M457 480.500h16M465.500 473v16M560 551.500h16M568.500 544v15" stroke="#ccc" />

      {/* board edge */}
      <path d="M258.500 458V242.500H714M712.500 242V458M711.500 458V673.500H257.500V458" stroke="#b8b8b8" />
      <path d="M247 675.500h19M256.500 666v19" stroke="#fff" strokeDasharray="1 1" />
    </g>

    <Legend items={netLabels} fill="#bb9b2d" />
    <Legend items={partLabels} fill="#969696" />
  </svg>
);

/* ---------- App ---------- */

const menus = ["File", "Edit", "Draw", "View", "Tools", "Library", "Options", "Window", "Help"];

const Tools = ({ items }) => (
  <PaletteGrid>
    {items.map((item, i) =>
      item ? (
        <ToolButton key={i} aria-label={item[0]} $w={item[2] ? 20 : 24} $active={item[2]} $size={22}>
          {item[1]}
        </ToolButton>
      ) : (
        <span key={i} />
      )
    )}
  </PaletteGrid>
);

const Combo = ({ label, w, boxW, value, pad }) => (
  <Field>
    <FieldName $w={w}>{label}</FieldName>
    <Box $w={boxW}>
      <TextInput defaultValue={value} $pad={pad} />
      <Arrow aria-label={`${label} list`}>
        <Down />
      </Arrow>
    </Box>
  </Field>
);

const Choice = ({ label, w, boxW, value }) => (
  <Field>
    <FieldName $w={w}>{label}</FieldName>
    <Box $w={boxW}>
      <Select defaultValue={value}>
        <option>{value}</option>
      </Select>
      <UpDown />
    </Box>
  </Field>
);

const Autodesk = () => (
  <svg width="14" height="14" viewBox="0 0 14 14" fill={DARK}>
    <path d="M0 13L4 1h5l5 12h-4L7 6l-2 5H3l-1 2z" />
  </svg>
);

function ActionBar() {
  return (
    <Toolbar>
      <Handle />
      <ToolButton aria-label="Open" $w={30}>
        <Icon stroke="#777"><path d="M17 10V7q0-2-2-2H6q-2 0-2 2v9l3 3h4" fill="#fafafa" /><path d="M7 10.500h7" stroke={DARK} strokeWidth="2.500" /><path d="M13 6l5 4.500-5 4.500z" fill={DARK} stroke="none" /><Tri x={18} y={16} /></Icon>
      </ToolButton>
      <ToolButton aria-label="Save">
        <Icon><path d="M5.500 5.500h12l1 1v12h-13z" fill={DARK} strokeWidth="2" /><path d="M7 7h10v4H7z" fill="#f2f1f0" stroke="none" /><path d="M8 14h8v5H8z" fill="#999" stroke="none" /></Icon>
      </ToolButton>
      <ToolButton aria-label="Print">
        <Icon><path d="M8 4h8v4H8z" fill="#999" stroke="none" /><path d="M4 10h16v6H4z" fill={DARK} stroke="none" /><path d="M7.500 14h9v5h-9z" fill="#f2f1f0" /></Icon>
      </ToolButton>
      <ToolButton aria-label="Image">
        <Icon><path d="M9 6.500h10v9" strokeWidth="1" /><path d="M4 9h4l1-2h5l1 2h2v10H4z" fill={DARK} stroke="none" /><circle cx="10.500" cy="13.500" r="3.500" fill="#2c9edb" stroke="none" /></Icon>
      </ToolButton>
      <Separator $w={5} />
      <ToolButton aria-label="Schematic">
        <Icon stroke="none"><path d="M4 4h16v8H4z" fill="#b5232d" /><path d="M4 12h16v8H4z" fill="#888" /><Small x="12" y="11" fontSize="7" fontWeight="700" fill="#fff">SCH</Small><Small x="12" y="19" fontSize="7" fontWeight="700" fill="#fff">BRD</Small></Icon>
      </ToolButton>
      <Separator />
      <ToolButton aria-label="Library">
        <Icon strokeWidth="1">{[4, 10, 16].map((x) => <g key={x}><path d={`M${x} 5h5v14h-5z`} fill={DARK} stroke="none" /><path d={`M${x + 1} 8h3v4h-3z`} fill="#ddd" stroke="none" /><path d={`M${x + 1} 16.500h3`} stroke="#aaa" /></g>)}</Icon>
      </ToolButton>
      <Separator />
      <ToolButton aria-label="Script">
        <Icon><path d="M4 4h16v16H4z" fill="#2a70bb" stroke="none" /><Small x="12" y="15" fill="#fff">SCR</Small><Tri x={20} /></Icon>
      </ToolButton>
      <ToolButton aria-label="ULP">
        <Icon><path d="M4 4h16v16H4z" fill="#f5931b" stroke="none" /><Small x="12" y="15" fill="#fff">ULP</Small><Tri x={20} /></Icon>
      </ToolButton>
      <Separator />
      <ToolButton aria-label="Fit"><Icon><Mag><path d="M8 9h6v3H8z" fill={DARK} /></Mag></Icon></ToolButton>
      <ToolButton aria-label="Zoom in"><Icon><Mag><path d="M8 10.500h6M11 7.500v6" /></Mag></Icon></ToolButton>
      <ToolButton aria-label="Zoom out"><Icon><Mag><path d="M8 10.500h6" /></Mag></Icon></ToolButton>
      <ToolButton aria-label="Redraw"><Icon><Mag><path d="M8 9h6M8 12h6" /></Mag></Icon></ToolButton>
      <ToolButton aria-label="Select"><Icon><Mag><path d="M7 8.500h8v4H7z" stroke={MID} /><path d="M9 9h3v3H9z" fill={DARK} stroke="none" /></Mag><Tri x={19} /></Icon></ToolButton>
      <Separator />
      <ToolButton aria-label="Undo"><Icon><path d="M8 12q7-6 10 4" strokeWidth="3" /><path d="M4 7l1 9h8z" fill={DARK} stroke="none" /></Icon></ToolButton>
      <ToolButton aria-label="Redo"><Icon stroke="#b3b1af"><path d="M16 12q-7-6-10 4" strokeWidth="3" /><path d="M20 7l-1 9h-8z" fill="#b3b1af" stroke="none" /></Icon></ToolButton>
      <Separator />
      <ToolButton aria-label="Stop" $w={30}><Icon><circle cx="12" cy="12" r="8" fill="#db1f3c" stroke="none" /><path d="M7 12h10" stroke="#fff" strokeWidth="3" /></Icon></ToolButton>
      <ToolButton aria-label="Go" $w={30}><Icon stroke="none"><circle cx="12" cy="7.500" r="3.500" fill="#aaa" /><circle cx="12" cy="16" r="3.500" fill="#666" /></Icon></ToolButton>
      <Separator />
      <Separator />
      <ToolButton aria-label="Help"><Icon><circle cx="12" cy="12" r="8" fill={DARK} stroke="none" /><path d="M9 10q0-3 3-3t3 2.500q0 1.500-3 3.500v1M12 16v2" stroke="#fff" strokeWidth="2" /></Icon></ToolButton>
      <Handle />
      <LinkButton $gap={12} aria-label="design link">
        <svg width="53" height="21" viewBox="0 0 53 21">
          <text x="7" y="9" fontSize="9" fill="#c8102e" fontFamily="DejaVu Sans, sans-serif">design</text>
          <text x="29" y="19" fontSize="8" fill="#222" fontFamily="DejaVu Sans, sans-serif">link</text>
          <path d="M14 11l3 3 3-3M28 14h4" stroke="#c8102e" fill="none" />
        </svg>
      </LinkButton>
      <LinkButton aria-label="PCB quote">
        <svg width="53" height="21" viewBox="0 0 53 21" fill="none" stroke="#c8102e">
          <path d="M5.500 12v2l3 2v5M17.500 12v2l-3 2v5M10.500 21V9M12.500 21V9" /><path d="M3.500 8.500h4v3h-4zM15.500 8.500h4v3h-4zM9.500 4.500h4v3h-4z" fill="#fff" />
          <Small x="32" y="11" fontSize="7" fontFamily="DejaVu Sans, sans-serif">PCB</Small>
          <Small x="37" y="19" fontSize="7" fontFamily="DejaVu Sans, sans-serif">QUOTE</Small>
        </svg>
      </LinkButton>
      <LinkButton aria-label="IDF to 3D">
        <svg width="53" height="21" viewBox="0 0 53 21" fill="none" stroke="#c8102e">
          <path d="M4.500 7.500l4-4h10v11l-4 4h-10zM8.500 3.500v11h10M6.500 5.500v11h10" /><path d="M10.500 5.500h6v6h-6zM12.500 7.500h2v4" />
          <Small x="31" y="11" fontSize="7" fontFamily="DejaVu Sans, sans-serif">IDF</Small>
          <Small x="35" y="19" fontSize="7" fontFamily="DejaVu Sans, sans-serif">TO 3D</Small>
        </svg>
      </LinkButton>
      <CadButton $gap={18}><Autodesk />MAKE</CadButton>
      <CadButton><Autodesk />MCAD</CadButton>
    </Toolbar>
  );
}

function ParameterBar() {
  return (
    <Toolbar>
      <Handle />
      <ToolButton aria-label="Grid" $w={30}>
        <Icon><path d="M4.500 4.500h14v14h-14zM9 4v15M14 4v15M4 9h15M4 14h15" /><Tri x={19} /></Icon>
      </ToolButton>
      <Separator $w={12} />
      <Field>
        <Box $w={154}>
          <Swatch />
          <Select aria-label="Layer" $pad={10} defaultValue="1 Top">
            <option>1 Top</option>
          </Select>
          <UpDown />
        </Box>
      </Field>
      <Separator $w={8} />
      <ToolButton aria-label="Parallel" $active $w={26}>
        <Icon strokeWidth="1"><path d="M7 8l9 8" /><path d="M6 7l4 1-3 3zM17 17l-4-1 3-3z" fill={DARK} stroke="none" /><path d="M4 9l3-3M15 19l4-4" stroke="#bbb" /></Icon>
      </ToolButton>
      <ToolButton aria-label="Horizontal" $w={28}><Icon strokeWidth="1"><path d="M4.500 9v7M19.500 5v14" stroke={MID} /><path d="M6 12.500h12M9 10l-3 2.500L9 15M15 10l3 2.500-3 2.500" stroke="#555" /></Icon></ToolButton>
      <ToolButton aria-label="Vertical" $w={28}><Icon strokeWidth="1"><path d="M5 5.500h14M8 19.500h8" stroke={MID} /><path d="M12.500 7v11M10 10l2.500-3 2.500 3M10 15l2.500 3 2.500-3" stroke="#555" /></Icon></ToolButton>
      <ToolButton aria-label="Radius" $w={28}><Icon strokeWidth="1"><circle cx="12" cy="12" r="7" stroke="#777" /><path d="M11 13l5-5M13 8h3v3" /></Icon></ToolButton>
      <ToolButton aria-label="Diameter" $w={28}><Icon strokeWidth="1"><circle cx="12" cy="12" r="7" stroke="#777" /><path d="M6 12h12M9 9.500L6.500 12 9 14.500M15 9.500l2.500 2.500-2.500 2.500" /></Icon></ToolButton>
      <ToolButton aria-label="Angle" $w={28}><Icon strokeWidth="1"><path d="M12 5L5 18.500h14" stroke="#777" /><path d="M12 7q5 3 6 9M11 10l1-4 4 1M15 14l3 3 1-4" /></Icon></ToolButton>
      <ToolButton aria-label="Leader" $w={28}><Icon strokeWidth="1"><path d="M7 17l6-10h6" stroke="#777" /><circle cx="7" cy="17" r="2.500" fill="#999" stroke="none" /></Icon></ToolButton>
      <Separator $w={15} />
      <Combo label="Size:" w={33} boxW={75} value="0.07" />
      <Combo label="Ratio:" w={41} boxW={71} value="8 %" />
      <Choice label="Unit:" w={34} boxW={55} value="mm" />
      <Combo label="Precision:" w={67} boxW={46} value="2" />
      <Choice label="Show:" w={42} boxW={47} value="off" />
      <Combo label="Width:" w={47} boxW={114} value="0.00511811" pad={1} />
      <span>Ext. Width:</span>
      <More aria-label="More">»</More>
    </Toolbar>
  );
}

export default function App() {
  return (
    <>
      <GlobalStyle />
      <Desktop>
        <TitleBar>
          <Title>2 Board - /home/sacgc/eagle/Final Project/final3.brd - EAGLE 8.0.1 free</Title>
          <Tray>
            <svg width="20" height="14" viewBox="0 0 20 14" fill="none" stroke="#dfdbd2"><path d="M1 4Q10-3 19 4L10 13z" /></svg>
            <Lang>En</Lang>
            <FaBluetoothB size={14} />
            <svg width="24" height="14" viewBox="0 0 24 14" fill="none" stroke="#dfdbd2" strokeWidth="1.500"><path d="M1 1h20v12H1zM21 5h2v4h-2" /><path d="M5 5l6 3V5l7 4-6-1v3z" fill="#dfdbd2" stroke="none" /></svg>
            <svg width="20" height="14" viewBox="0 0 20 14" fill="none" stroke="#dfdbd2"><path d="M1 4h3l4-3v12l-4-3H1z" fill="#dfdbd2" /><path d="M11 4q2 3 0 6" strokeWidth="1.500" /><path d="M14 2q3 5 0 10M17 1q4 6 0 12" opacity=".5" strokeWidth="1.500" /></svg>
            <Clock dir="rtl">5:15 م</Clock>
            <svg width="16" height="16" viewBox="0 0 16 16" fill="none" stroke="#dfdbd2" strokeWidth="2"><path d="M5.500 3.500a5 5 0 1 0 5 0M8 1v6" /><path d="M1 8h2M13 8h2M3 13l1.500-1.500M13 13l-1.500-1.500M8 13v3M3 3l1.500 1.500M13 3l-1.500 1.500" /></svg>
          </Tray>
        </TitleBar>
        <Work>
          <Launcher aria-label="Launcher">
            {apps.map((app) => (
              <Tile key={app.name} $bg={app.bg} aria-label={app.name}>
                {app.art}
              </Tile>
            ))}
          </Launcher>
          <Main>
            <MenuBar>
              {menus.map((name) => (
                <MenuItem key={name}>
                  <u>{name[0]}</u>
                  {name.slice(1)}
                </MenuItem>
              ))}
            </MenuBar>
            <ActionBar />
            <ParameterBar />
            <Body>
              <Palette>
                <PaletteHandle />
                <Tools items={paletteTop} />
                <PaletteRule />
                <Tools items={paletteEdit} />
                <PaletteRule />
                <Tools items={paletteDraw} />
                <PaletteRule />
                <Tools items={paletteCheck} />
              </Palette>
              <Editor>
                <CommandRow>
                  <Sunken $w={206}>0.0005 inch (-0.4905 3.0080)</Sunken>
                  <Sunken $w={13} />
                  <CommandBox>
                    <CommandInput aria-label="Command" autoFocus />
                    <CommandArrow aria-label="Command history"><Down /></CommandArrow>
                  </CommandBox>
                </CommandRow>
                <CanvasGrid>
                  <Canvas><Board /></Canvas>
                  <ScrollBar $vertical>
                    <ScrollArrow $r="6px 6px 0 0" aria-label="Scroll up"><svg width="5" height="4" viewBox="0 0 6 4"><path d="M0 4h6L3 0z" fill="#777" /></svg></ScrollArrow>
                    <Thumb $vertical><svg width="5" height="8" viewBox="0 0 5 8"><path d="M0 .5h5M0 3.500h5M0 6.500h5" stroke="#aaa" /></svg></Thumb>
                    <ScrollArrow $r="0 0 6px 6px" aria-label="Scroll down"><svg width="5" height="4" viewBox="0 0 6 4"><path d="M0 0h6L3 4z" fill="#777" /></svg></ScrollArrow>
                  </ScrollBar>
                  <ScrollBar>
                    <ScrollArrow $r="6px 0 0 6px" aria-label="Scroll left"><svg width="4" height="5" viewBox="0 0 4 6"><path d="M4 0v6L0 3z" fill="#999" /></svg></ScrollArrow>
                    <Thumb><svg width="8" height="5" viewBox="0 0 8 5"><path d="M.5 0v5M3.500 0v5M6.500 0v5" stroke="#aaa" /></svg></Thumb>
                    <ScrollArrow $r="0 6px 6px 0" aria-label="Scroll right"><svg width="4" height="5" viewBox="0 0 4 6"><path d="M0 0v6l4-3z" fill="#999" /></svg></ScrollArrow>
                  </ScrollBar>
                </CanvasGrid>
              </Editor>
            </Body>
            <StatusBar>
              <StatusCell $grow>{"'/home/sacgc/eagle/Final Project/final3.brd' saved.  ♦ Left-click to draw dimension"}</StatusCell>
              <StatusCell><svg width="14" height="16" viewBox="0 0 14 16"><path d="M8 0L1 9h5l-1 7 8-9H8z" fill="#77b82e" /></svg></StatusCell>
              <StatusCell />
              <StatusCell><RouteIcon><Small x="6" y="20" fontSize="9">A</Small></RouteIcon></StatusCell>
            </StatusBar>
          </Main>
        </Work>
      </Desktop>
    </>
  );
}
